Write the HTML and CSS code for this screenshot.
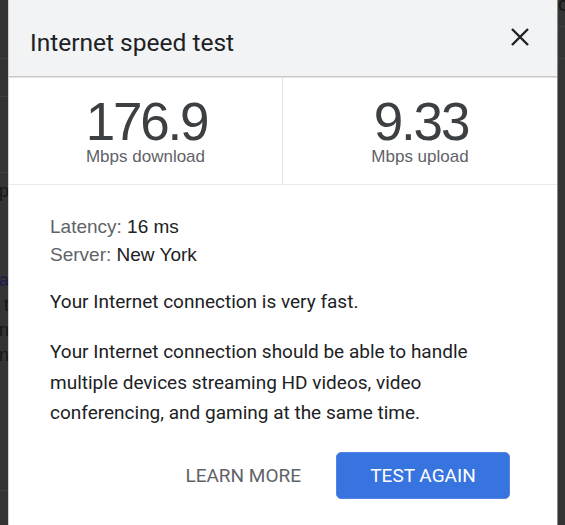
FILE: index.html
```html
<!DOCTYPE html>
<html lang="en">
<head>
    <meta charset="UTF-8">
    <meta name="viewport" content="width=device-width, initial-scale=1.0">
    <title>Internet speed test</title>
    <link rel="stylesheet" href="styles.css">
</head>
<body>
    <!-- page behind the dialog, only the edges show -->
    <div class="backdrop left">
        <div class="rule r1"></div>
        <div class="rule r2"></div>
        <div class="rule r3"></div>
        <div class="ghost g1">Clear and simple speed tests p</div>
        <div class="ghost link g2">run by Measurement Lab a</div>
        <div class="ghost">results are shared with M-Lab t</div>
        <div class="ghost">to help advance Internet research n</div>
        <div class="ghost">and keep the measurements open n</div>
        <div class="rule r4"></div>
    </div>

    <div class="dialog">
        <div class="dialog-header">
            <h1 class="dialog-title">Internet speed test</h1>
            <button class="close" aria-label="Close">
                <svg width="20" height="20" viewBox="0 0 20 20">
                    <path d="M2 2 L18 18 M18 2 L2 18" stroke="#202124" stroke-width="2.4" fill="none"/>
                </svg>
            </button>
        </div>

        <div class="stats">
            <div class="stat">
                <div class="stat-value">176.9</div>
                <div class="stat-label">Mbps download</div>
            </div>
            <div class="stat">
                <div class="stat-value">9.33</div>
                <div class="stat-label">Mbps upload</div>
            </div>
        </div>

        <div class="dialog-body">
            <div class="meta">
                <div><span class="meta-key">Latency:</span> 16 ms</div>
                <div><span class="meta-key">Server:</span> New York</div>
            </div>
            <p class="summary">Your Internet connection is very fast.</p>
            <p class="detail">Your Internet connection should be able to handle multiple devices streaming HD videos, video conferencing, and gaming at the same time.</p>

            <div class="actions">
                <button class="btn-text">LEARN MORE</button>
                <button class="btn-primary">TEST AGAIN</button>
            </div>
        </div>
    </div>

    <div class="backdrop right">
        <div class="ghost cut">c</div>
        <div class="rule r5"></div>
        <div class="rule r6"></div>
    </div>
</body>
</html>
```

FILE: styles.css
```css
html, body {
    margin: 0;
    height: 525px;
    overflow: hidden;
}
body {
    display: flex;
    background-color: #343434;
    font-family: Roboto, "Liberation Sans", Arial, sans-serif;
}
button {
    font-family: inherit;
    cursor: pointer;
}

/* backdrop edges */
.backdrop {
    overflow: hidden;
    background-color: #343434;
}
.backdrop.left {
    width: 8px;
    flex: none;
}
.backdrop.right {
    flex: 1;
}
.rule {
    border-top: 1px solid #3f3f3f;
}
.r1 { margin-top: 58px; }
.r2 { margin-top: 37px; }
.r3 { margin-top: 75px; }
.r4 { margin-top: 122px; }
.r5 { margin-top: 9px; }
.r6 { margin-top: 31px; }
.ghost {
    width: 300px;
    margin-left: -291px;
    text-align: right;
    white-space: nowrap;
    font-family: "Liberation Sans", Arial, sans-serif;
    font-size: 18px;
    line-height: 25px;
    color: #161616;
}
.ghost.g1 { margin-top: 6px; }
.ghost.g2 { margin-top: 64px; }
.ghost.link { color: #1b1b4a; }
.ghost.cut {
    width: auto;
    margin-left: 0;
    margin-top: -8px;
    text-align: left;
    font-size: 20px;
}

/* dialog */
.dialog {
    width: 548px;
    flex: none;
    background-color: #fff;
    border-left: 1px solid #cfcfcf;
    border-right: 1px solid #8a8a8a;
    color: #202124;
}
.dialog-header {
    height: 76px;
    display: flex;
    justify-content: space-between;
    align-items: flex-start;
    padding: 0 27px 0 21px;
    background-color: #f1f3f4;
    border-bottom: 1px solid #c9c9c9;
    box-shadow: 0 1px 0 #e2e2e2;
}
.dialog-title {
    margin: 28px 0 0 0;
    font-size: 24.5px;
    font-weight: 400;
    line-height: 30px;
    color: #202124;
}
.close {
    margin-top: 27px;
    padding: 0;
    border: none;
    background: none;
    width: 20px;
    height: 20px;
}
.close svg {
    display: block;
}

.stats {
    display: grid;
    grid-template-columns: 274px 1fr;
    height: 107px;
    border-bottom: 1px solid #e8eaed;
}
.stat {
    text-align: center;
    padding-top: 20px;
    font-family: "Liberation Sans", Arial, sans-serif;
}
.stat:first-child {
    border-right: 1px solid #e3e3e3;
}
.stat-value {
    font-size: 53px;
    line-height: 50px;
    color: #3c4043;
    letter-spacing: -2.2px;
    text-indent: 2px;
}
.stat-label {
    margin-top: 0;
    font-size: 17px;
    line-height: 20px;
    color: #5f6368;
}

.dialog-body {
    padding: 28px 47px 0 41px;
    font-size: 19px;
}
.meta {
    line-height: 28px;
    font-family: "Liberation Sans", Arial, sans-serif;
}
.meta-key {
    color: #5f6368;
}
.summary {
    margin: 18px 0 0 0;
    line-height: 30px;
}
.detail {
    margin: 20px 0 0 0;
    line-height: 30.5px;
}
.actions {
    display: flex;
    justify-content: flex-end;
    align-items: center;
    gap: 35px;
    margin-top: 23px;
}
.btn-text {
    padding: 0;
    border: none;
    background: none;
    font-size: 19px;
    color: #5f6368;
}
.btn-primary {
    width: 174px;
    height: 47px;
    border: 1px solid #5585e4;
    border-radius: 5px;
    background-color: #3874e0;
    color: #fff;
    font-size: 19px;
}
```
